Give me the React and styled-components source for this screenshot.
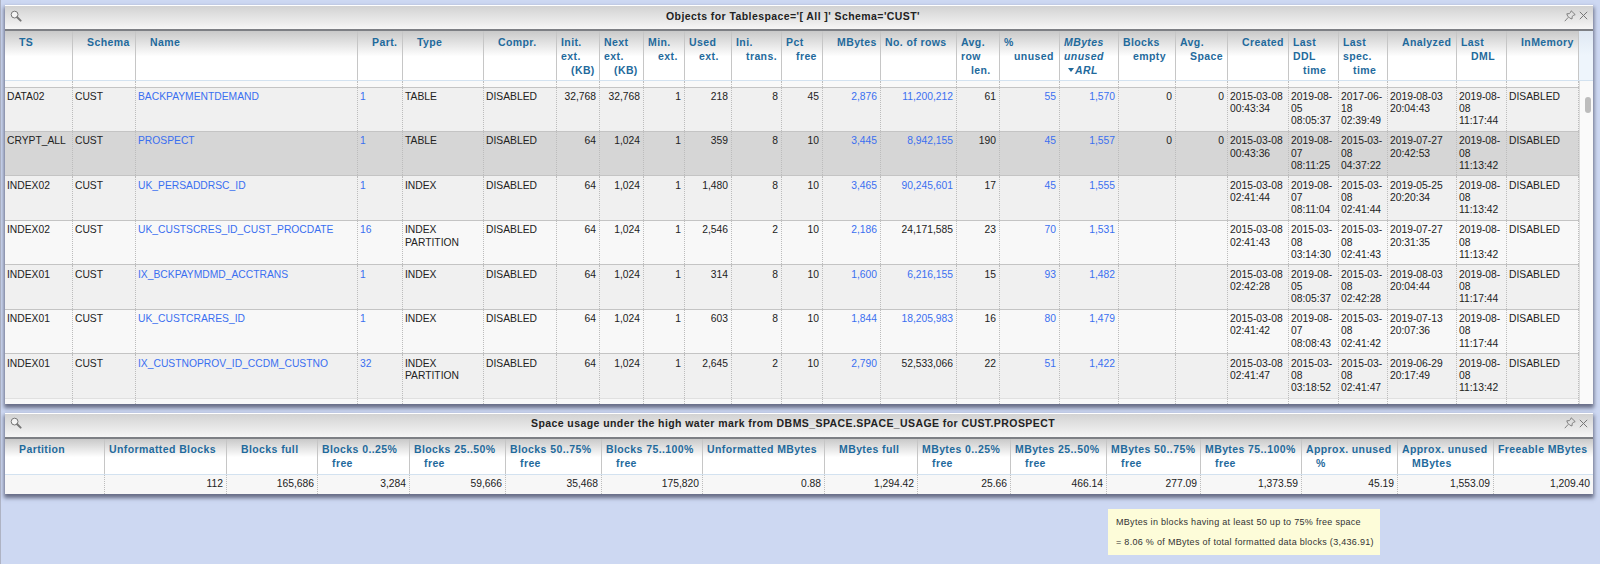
import styled, { createGlobalStyle } from 'styled-components';

const OBJECT_COLUMNS = [
  { key: 'ts', width: 68, head: ['TS'] },
  { key: 'schema', width: 63, head: ['Schema'] },
  { key: 'name', width: 222, head: ['Name'], link: true },
  { key: 'part', width: 45, head: ['Part.'], link: true },
  { key: 'type', width: 81, head: ['Type'] },
  { key: 'compr', width: 73, head: ['Compr.'] },
  { key: 'init', width: 43, head: ['Init.', 'ext.', '(KB)'], right: true },
  { key: 'next', width: 44, head: ['Next', 'ext.', '(KB)'], right: true },
  { key: 'min', width: 41, head: ['Min.', 'ext.'], right: true },
  { key: 'used', width: 47, head: ['Used', 'ext.'], right: true },
  { key: 'trans', width: 50, head: ['Ini.', 'trans.'], right: true },
  { key: 'pct', width: 41, head: ['Pct', 'free'], right: true },
  { key: 'mb', width: 58, head: ['MBytes'], right: true, link: true },
  { key: 'rows', width: 76, head: ['No. of rows'], right: true, link: true, flush: true },
  { key: 'avg', width: 43, head: ['Avg.', 'row', 'len.'], right: true },
  { key: 'unused', width: 60, head: ['%', 'unused'], right: true, link: true },
  { key: 'arl', width: 59, head: ['MBytes', 'unused', 'ARL'], right: true, link: true, sorted: true },
  { key: 'empty', width: 57, head: ['Blocks', 'empty'], right: true },
  { key: 'space', width: 52, head: ['Avg.', 'Space'], right: true },
  { key: 'created', width: 61, head: ['Created'] },
  { key: 'ddl', width: 50, head: ['Last', 'DDL', 'time'] },
  { key: 'spec', width: 49, head: ['Last', 'spec.', 'time'] },
  { key: 'analyzed', width: 69, head: ['Analyzed'] },
  { key: 'dml', width: 50, head: ['Last', 'DML'] },
  { key: 'mem', width: 72, head: ['InMemory'] },
];

const base = { schema: 'CUST', compr: 'DISABLED', min: '1', mem: 'DISABLED' };

const OBJECT_ROWS = [
  { ...base, ts: 'DATA02', name: 'BACKPAYMENTDEMAND', part: '1', type: 'TABLE', init: '32,768', next: '32,768', used: '218', trans: '8', pct: '45', mb: '2,876', rows: '11,200,212', avg: '61', unused: '55', arl: '1,570', empty: '0', space: '0', created: '2015-03-08\n00:43:34', ddl: '2019-08-\n05\n08:05:37', spec: '2017-06-\n18\n02:39:49', analyzed: '2019-08-03\n20:04:43', dml: '2019-08-\n08\n11:17:44' },
  { ...base, selected: true, ts: 'CRYPT_ALL', name: 'PROSPECT', part: '1', type: 'TABLE', init: '64', next: '1,024', used: '359', trans: '8', pct: '10', mb: '3,445', rows: '8,942,155', avg: '190', unused: '45', arl: '1,557', empty: '0', space: '0', created: '2015-03-08\n00:43:36', ddl: '2019-08-\n07\n08:11:25', spec: '2015-03-\n08\n04:37:22', analyzed: '2019-07-27\n20:42:53', dml: '2019-08-\n08\n11:13:42' },
  { ...base, ts: 'INDEX02', name: 'UK_PERSADDRSC_ID', part: '1', type: 'INDEX', init: '64', next: '1,024', used: '1,480', trans: '8', pct: '10', mb: '3,465', rows: '90,245,601', avg: '17', unused: '45', arl: '1,555', created: '2015-03-08\n02:41:44', ddl: '2019-08-\n07\n08:11:04', spec: '2015-03-\n08\n02:41:44', analyzed: '2019-05-25\n20:20:34', dml: '2019-08-\n08\n11:13:42' },
  { ...base, light: true, plainRows: true, ts: 'INDEX02', name: 'UK_CUSTSCRES_ID_CUST_PROCDATE', part: '16', type: 'INDEX\nPARTITION', init: '64', next: '1,024', used: '2,546', trans: '2', pct: '10', mb: '2,186', rows: '24,171,585', avg: '23', unused: '70', arl: '1,531', created: '2015-03-08\n02:41:43', ddl: '2015-03-\n08\n03:14:30', spec: '2015-03-\n08\n02:41:43', analyzed: '2019-07-27\n20:31:35', dml: '2019-08-\n08\n11:13:42' },
  { ...base, ts: 'INDEX01', name: 'IX_BCKPAYMDMD_ACCTRANS', part: '1', type: 'INDEX', init: '64', next: '1,024', used: '314', trans: '8', pct: '10', mb: '1,600', rows: '6,216,155', avg: '15', unused: '93', arl: '1,482', created: '2015-03-08\n02:42:28', ddl: '2019-08-\n05\n08:05:37', spec: '2015-03-\n08\n02:42:28', analyzed: '2019-08-03\n20:04:44', dml: '2019-08-\n08\n11:17:44' },
  { ...base, light: true, ts: 'INDEX01', name: 'UK_CUSTCRARES_ID', part: '1', type: 'INDEX', init: '64', next: '1,024', used: '603', trans: '8', pct: '10', mb: '1,844', rows: '18,205,983', avg: '16', unused: '80', arl: '1,479', created: '2015-03-08\n02:41:42', ddl: '2019-08-\n07\n08:08:43', spec: '2015-03-\n08\n02:41:42', analyzed: '2019-07-13\n20:07:36', dml: '2019-08-\n08\n11:17:44' },
  { ...base, plainRows: true, ts: 'INDEX01', name: 'IX_CUSTNOPROV_ID_CCDM_CUSTNO', part: '32', type: 'INDEX\nPARTITION', init: '64', next: '1,024', used: '2,645', trans: '2', pct: '10', mb: '2,790', rows: '52,533,066', avg: '22', unused: '51', arl: '1,422', created: '2015-03-08\n02:41:47', ddl: '2015-03-\n08\n03:18:52', spec: '2015-03-\n08\n02:41:47', analyzed: '2019-06-29\n20:17:49', dml: '2019-08-\n08\n11:13:42' },
];

const USAGE_COLUMNS = [
  { width: 100, head: ['Partition'], value: '' },
  { width: 122, head: ['Unformatted Blocks'], value: '112', flush: true },
  { width: 91, head: ['Blocks full'], value: '165,686' },
  { width: 92, head: ['Blocks 0..25%', 'free'], value: '3,284' },
  { width: 96, head: ['Blocks 25..50%', 'free'], value: '59,666' },
  { width: 96, head: ['Blocks 50..75%', 'free'], value: '35,468' },
  { width: 101, head: ['Blocks 75..100%', 'free'], value: '175,820' },
  { width: 122, head: ['Unformatted MBytes'], value: '0.88', flush: true },
  { width: 93, head: ['MBytes full'], value: '1,294.42' },
  { width: 93, head: ['MBytes 0..25%', 'free'], value: '25.66' },
  { width: 96, head: ['MBytes 25..50%', 'free'], value: '466.14' },
  { width: 94, head: ['MBytes 50..75%', 'free'], value: '277.09' },
  { width: 101, head: ['MBytes 75..100%', 'free'], value: '1,373.59' },
  { width: 96, head: ['Approx. unused', '%'], value: '45.19' },
  { width: 96, head: ['Approx. unused', 'MBytes'], value: '1,553.09' },
  { width: 99, head: ['Freeable MBytes'], value: '1,209.40', flush: true },
];

const template = (columns) => columns.map((c) => `${c.width}px`).join(' ');
const OBJECT_GRID = template(OBJECT_COLUMNS);
const USAGE_GRID = template(USAGE_COLUMNS);

const SearchIcon = () => (
  <svg width="12" height="12" viewBox="0 0 12 12" fill="none">
    <circle cx="4.6" cy="4.6" r="3.4" stroke="#777" strokeWidth="1" fill="#f4f4f4" />
    <path d="M7.2 7.2 L10.6 10.6" stroke="#777" strokeWidth="2" strokeLinecap="round" />
  </svg>
);

const PinIcon = () => (
  <svg width="12" height="12" viewBox="0 0 12 12" fill="none" stroke="#777" strokeWidth="0.9" strokeLinejoin="round">
    <path d="M7.2 0.8 L11.2 4.6 L9.8 5.2 L8.2 6.4 L8 9 L5.6 8 L3.6 6 L2.8 3.8 L5.4 3.6 L6.6 2.2 Z" />
    <path d="M4.2 7.4 L0.8 11.2" />
  </svg>
);

const CloseIcon = () => (
  <svg width="9" height="9" viewBox="0 0 9 9" fill="none" stroke="#777" strokeWidth="1">
    <path d="M0.8 0.8 L8.2 8.2 M8.2 0.8 L0.8 8.2" />
  </svg>
);

const PanelTitle = ({ children }) => (
  <S.TitleBar>
    <S.IconSlot>
      <SearchIcon />
    </S.IconSlot>
    <S.Title>{children}</S.Title>
    <S.Controls>
      <PinIcon />
      <CloseIcon />
    </S.Controls>
  </S.TitleBar>
);

const HeadLines = ({ column }) =>
  column.head.map((line, i) => {
    const last = i === column.head.length - 1;
    return (
      <S.HeadLine key={line} $indent={last && !column.flush}>
        {last && column.sorted && <S.SortArrow />}
        {line}
      </S.HeadLine>
    );
  });

const isLink = (column, row) => column.link && !(column.key === 'rows' && row.plainRows);

const App = () => (
  <>
    <GlobalStyle />
    <S.Page>
      <S.Panel>
        <PanelTitle>Objects for Tablespace='[ All ]' Schema='CUST'</PanelTitle>
        <S.HeadRow $grid={`${OBJECT_GRID} 14px`} $height={50}>
          {OBJECT_COLUMNS.map((column) => (
            <S.HeadCell key={column.key} $italic={column.sorted}>
              <HeadLines column={column} />
            </S.HeadCell>
          ))}
          <S.HeadFiller />
        </S.HeadRow>
        <S.ScrollBody>
          <S.Rows>
            <S.Row $grid={OBJECT_GRID} $height={5.5} $bg="#f9f9f9" $noLine>
              {OBJECT_COLUMNS.map((column) => (
                <S.Cell key={column.key} />
              ))}
            </S.Row>
            {OBJECT_ROWS.map((row) => (
              <S.Row
                key={row.name}
                $grid={OBJECT_GRID}
                $height={44.45}
                $bg={row.selected ? '#d6d6d6' : row.light ? '#f8f8f8' : '#f0f0f0'}
              >
                {OBJECT_COLUMNS.map((column) => (
                  <S.Cell key={column.key} $right={column.right} $link={isLink(column, row)}>
                    {row[column.key]}
                  </S.Cell>
                ))}
              </S.Row>
            ))}
            <S.Row $grid={OBJECT_GRID} $height={8} $bg="#f8f8f8" $soft>
              {OBJECT_COLUMNS.map((column) => (
                <S.Cell key={column.key} />
              ))}
            </S.Row>
          </S.Rows>
          <S.ScrollTrack>
            <S.ScrollThumb />
          </S.ScrollTrack>
        </S.ScrollBody>
      </S.Panel>

      <S.Panel>
        <PanelTitle>Space usage under the high water mark from DBMS_SPACE.SPACE_USAGE for CUST.PROSPECT</PanelTitle>
        <S.HeadRow $grid={USAGE_GRID} $height={36}>
          {USAGE_COLUMNS.map((column) => (
            <S.HeadCell key={column.head[0]}>
              <HeadLines column={column} />
            </S.HeadCell>
          ))}
        </S.HeadRow>
        <S.Row $grid={USAGE_GRID} $height={19} $bg="#f7f7f7" $noLine>
          {USAGE_COLUMNS.map((column) => (
            <S.UsageCell key={column.head[0]}>{column.value}</S.UsageCell>
          ))}
        </S.Row>
      </S.Panel>

      <S.Tooltip>
        <div>MBytes in blocks having at least 50 up to 75% free space</div>
        <div>= 8.06 % of MBytes of total formatted data blocks (3,436.91)</div>
      </S.Tooltip>
    </S.Page>
  </>
);

export default App;

const GlobalStyle = createGlobalStyle`
  html, body {
    margin: 0;
    height: 100%;
    overflow: hidden;
    background: #cdd8f2;
  }
  body {
    font-family: "Liberation Sans", Arial, sans-serif;
  }
`;

const S = {
  Page: styled.div`
    position: relative;
    display: flex;
    flex-direction: column;
    gap: 9px;
    box-sizing: border-box;
    width: 1600px;
    height: 564px;
    padding: 5px 7px 0 4px;
    border-left: 1px solid #aeb3c4;
  `,
  Panel: styled.section`
    background: #fff;
    box-shadow: 0 3px 4px 1px rgba(70, 74, 98, 0.75);
  `,
  TitleBar: styled.header`
    display: flex;
    align-items: center;
    box-sizing: border-box;
    height: 26px;
    padding-bottom: 4px;
    border-top: 1px solid #fff;
    border-bottom: 2px solid #7d7f84;
    background: linear-gradient(#d2d2d2, #f6f6f6);
  `,
  IconSlot: styled.div`
    display: flex;
    width: 22px;
    padding-left: 5px;
    box-sizing: border-box;
  `,
  Title: styled.h1`
    flex: 1;
    margin: 0;
    text-align: center;
    font-size: 10.5px;
    font-weight: 700;
    letter-spacing: 0.42px;
    color: #222;
  `,
  Controls: styled.div`
    display: flex;
    align-items: center;
    gap: 3px;
    justify-content: flex-end;
    box-sizing: border-box;
    width: 34px;
    padding-right: 5px;
  `,
  HeadRow: styled.div`
    display: grid;
    grid-template-columns: ${(p) => p.$grid};
    box-sizing: border-box;
    height: ${(p) => p.$height}px;
    border-bottom: 1px solid #d3e2f0;
  `,
  HeadCell: styled.div`
    box-sizing: border-box;
    padding: 3.5px 0 0 4px;
    border-right: 1px solid #c6c6c6;
    background: linear-gradient(#c9c9c9, #fff 52%);
    font-size: 10.5px;
    line-height: 14px;
    font-weight: 700;
    font-style: ${(p) => (p.$italic ? 'italic' : 'normal')};
    letter-spacing: 0.4px;
    color: #1f6a9c;
    white-space: nowrap;
    &:last-child {
      border-right: 0;
    }
  `,
  HeadLine: styled.div`
    padding-left: ${(p) => (p.$indent ? '10px' : '0')};
  `,
  HeadFiller: styled.div`
    background: linear-gradient(#dfe8f3, #eef5fc 50%);
  `,
  SortArrow: styled.span`
    display: inline-block;
    margin: 0 1px 1px -6px;
    border-left: 3px solid transparent;
    border-right: 3px solid transparent;
    border-top: 4px solid #1f6a9c;
    vertical-align: middle;
  `,
  ScrollBody: styled.div`
    display: flex;
    height: 322.5px;
    overflow: hidden;
  `,
  Rows: styled.div`
    flex: none;
    overflow: hidden;
  `,
  Row: styled.div`
    display: grid;
    grid-template-columns: ${(p) => p.$grid};
    box-sizing: border-box;
    height: ${(p) => p.$height}px;
    background: ${(p) => p.$bg};
    border-top: ${(p) => (p.$noLine ? '0' : `1px solid ${p.$soft ? '#e0e0e0' : '#c4c4c4'}`)};
  `,
  Cell: styled.div`
    box-sizing: border-box;
    padding: 3.5px 3px 0 2px;
    border-right: 1px dotted #bcbcbc;
    font-size: 10.3px;
    line-height: 12.2px;
    white-space: pre-line;
    text-align: ${(p) => (p.$right ? 'right' : 'left')};
    color: ${(p) => (p.$link ? '#3a6ff0' : '#222')};
  `,
  UsageCell: styled.div`
    box-sizing: border-box;
    padding: 3.5px 3px 0 2px;
    border-right: 1px dotted #bcbcbc;
    font-size: 10.3px;
    line-height: 12.2px;
    text-align: right;
    color: #222;
    &:last-child {
      border-right: 0;
    }
  `,
  ScrollTrack: styled.div`
    flex: 1;
    box-sizing: border-box;
    padding: 16px 0 0 5px;
    border-left: 1px solid #dcdcdc;
    background: #fafafa;
  `,
  ScrollThumb: styled.div`
    width: 6px;
    height: 16px;
    border-radius: 3px;
    background: #bdbdbd;
  `,
  Tooltip: styled.div`
    position: absolute;
    left: 1107px;
    top: 509px;
    display: flex;
    flex-direction: column;
    gap: 8px;
    box-sizing: border-box;
    width: 272px;
    height: 46px;
    padding: 7px 0 0 8px;
    background: #fdfcd9;
    font-size: 9px;
    line-height: 12px;
    letter-spacing: 0.3px;
    color: #333;
  `,
};
